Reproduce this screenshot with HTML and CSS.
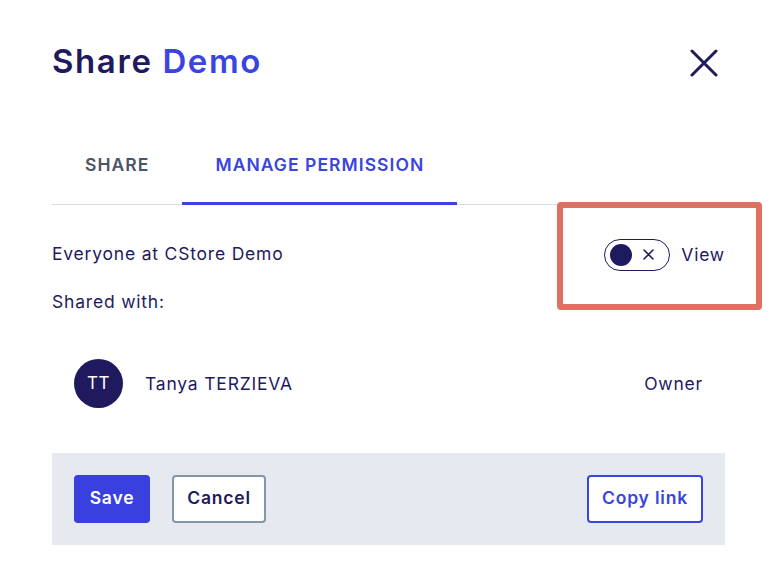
FILE: index.html
```html
<!DOCTYPE html>
<html>
<head>
<meta charset="utf-8">
<link rel="stylesheet" href="styles.css">
</head>
<body>
<div class="dialog">
  <header class="head">
    <h1 class="title">Share <span class="accent">Demo</span></h1>
    <button class="close" aria-label="Close">
      <svg width="28" height="28" viewBox="0 0 28 28"><path d="M2 2 L26 26 M26 2 L2 26" stroke="#1f1a5e" stroke-width="3" stroke-linecap="round"/></svg>
    </button>
  </header>
  <nav class="tabs">
    <div class="tab">SHARE</div>
    <div class="tab active">MANAGE PERMISSION</div>
  </nav>
  <div class="row everyone">
    <span>Everyone at CStore Demo</span>
    <div class="perm">
      <span class="toggle"><span class="knob"></span><svg class="tx" width="11" height="11" viewBox="0 0 11 11"><path d="M1 1 L10 10 M10 1 L1 10" stroke="#1f1a5e" stroke-width="1.6" stroke-linecap="round"/></svg></span>
      <span class="view">View</span>
    </div>
  </div>
  <div class="label">Shared with:</div>
  <div class="row person">
    <div class="who">
      <span class="avatar">TT</span>
      <span class="name">Tanya TERZIEVA</span>
    </div>
    <span class="role">Owner</span>
  </div>
  <footer class="foot">
    <div class="left">
      <button class="btn primary">Save</button>
      <button class="btn secondary">Cancel</button>
    </div>
    <button class="btn outline">Copy link</button>
  </footer>
</div>
<div class="highlight"></div>
</body>
</html>
```
FILE: styles.css
```css
* { box-sizing: border-box; }
html, body { margin: 0; background: #fff; }
body {
  font-family: "Inter", "Open Sans", sans-serif;
  color: #1f1a5e;
  font-size: 17.5px;
  letter-spacing: 0.8px;
  width: 776px;
  height: 568px;
  overflow: hidden;
  position: relative;
}
.dialog {
  width: 673px;
  margin-left: 52px;
}
.head {
  display: flex;
  justify-content: space-between;
  align-items: center;
  padding-top: 34px;
  height: 88px;
}
.title {
  margin: 0;
  font-size: 33px;
  font-weight: 600;
  line-height: 44px;
  letter-spacing: 1.6px;
  color: #1f1a5e;
}
.accent { color: #3a44e0; }
.close {
  background: none;
  border: 0;
  padding: 0;
  margin-right: 7px;
  margin-top: 4px;
  width: 28px;
  height: 28px;
  display: flex;
}
.tabs {
  display: flex;
  margin-top: 40px;
  border-bottom: 1px solid #d8dde6;
}
.tab {
  padding: 27px 33px 29px;
  font-size: 17.5px;
  font-weight: 600;
  line-height: 20px;
  letter-spacing: 1.05px;
  color: #4a5568;
}
.tab.active {
  color: #3a44e0;
  border-bottom: 3px solid #3a44e0;
  margin-bottom: -1px;
  padding-bottom: 27px;
}
.row {
  display: flex;
  justify-content: space-between;
  align-items: center;
}
.everyone {
  margin-top: 31px;
  height: 34px;
}
.perm {
  display: flex;
  align-items: center;
  gap: 11px;
  padding-top: 3px;
}
.toggle {
  display: flex;
  align-items: center;
  width: 66px;
  height: 32px;
  border: 1px solid #1f1a5e;
  border-radius: 16px;
  padding-left: 5px;
}
.knob {
  width: 22px;
  height: 22px;
  border-radius: 50%;
  background: #1f1a5e;
}
.tx {
  margin-left: 11px;
}
.label {
  margin-top: 22px;
  line-height: 20px;
}
.person {
  margin-top: 46px;
  padding-left: 22px;
  padding-right: 22px;
  height: 50px;
}
.who { display: flex; align-items: center; gap: 22px; }
.avatar {
  width: 49px;
  height: 49px;
  border-radius: 50%;
  background: #1f1a5e;
  color: #fff;
  display: flex;
  align-items: center;
  justify-content: center;
  font-size: 17px;
  letter-spacing: 0.5px;
}
.foot {
  margin-top: 45px;
  background: #e6e9ef;
  height: 92px;
  padding: 0 22px;
  display: flex;
  justify-content: space-between;
  align-items: center;
}
.left { display: flex; gap: 22px; }
.btn {
  height: 48px;
  border-radius: 4px;
  font-family: inherit;
  font-size: 17.5px;
  font-weight: 600;
  letter-spacing: 0.8px;
  line-height: 20px;
  padding: 0 0 2px;
  cursor: pointer;
}
.primary {
  width: 76px;
  background: #3a40e0;
  color: #fff;
  border: 0;
}
.secondary {
  width: 94px;
  background: #fff;
  border: 2px solid #8595ad;
  color: #1f1a5e;
}
.outline {
  width: 116px;
  background: #fff;
  border: 2px solid #3a44e0;
  color: #3a44e0;
}
.highlight {
  position: absolute;
  left: 557px;
  top: 202px;
  width: 205px;
  height: 108px;
  border: 6px solid #e07063;
  border-radius: 4px;
}
```
